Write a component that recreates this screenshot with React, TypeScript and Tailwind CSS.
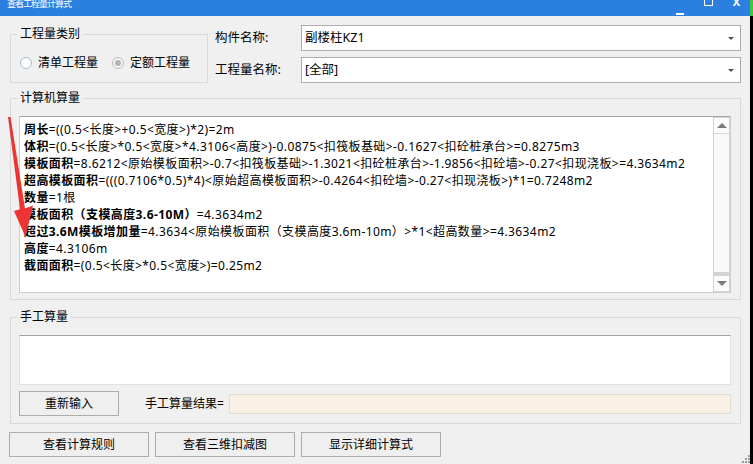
import React from "react";

const FONT = '"Noto Sans", "Noto Sans CJK SC", sans-serif';

const lines: Array<[string, string]> = [
  ["周长", "=((0.5<长度>+0.5<宽度>)*2)=2m"],
  ["体积", "=(0.5<长度>*0.5<宽度>*4.3106<高度>)-0.0875<扣筏板基础>-0.1627<扣砼桩承台>=0.8275m3"],
  ["模板面积", "=8.6212<原始模板面积>-0.7<扣筏板基础>-1.3021<扣砼桩承台>-1.9856<扣砼墙>-0.27<扣现浇板>=4.3634m2"],
  ["超高模板面积", "=(((0.7106*0.5)*4)<原始超高模板面积>-0.4264<扣砼墙>-0.27<扣现浇板>)*1=0.7248m2"],
  ["数量", "=1根"],
  ["模板面积（支模高度3.6-10M）", "=4.3634m2"],
  ["超过3.6M模板增加量", "=4.3634<原始模板面积（支模高度3.6m-10m）>*1<超高数量>=4.3634m2"],
  ["高度", "=4.3106m"],
  ["截面面积", "=(0.5<长度>*0.5<宽度>)=0.25m2"],
];

function Combo({ text }: { text: string }) {
  return (
    <div className="flex h-[26px] w-[440px] items-center border border-[#adadad] bg-white pl-[3px] pr-[6px]">
      <span className="flex-1 text-[12.5px] leading-[16px] text-black">{text}</span>
      <div className="h-0 w-0 border-x-[3px] border-t-[3px] border-x-transparent border-t-[#505050]" />
    </div>
  );
}

function Radio({ checked, label }: { checked?: boolean; label: string }) {
  return (
    <div className="flex items-center">
      {checked ? (
        <div className="flex h-[12px] w-[12px] items-center justify-center rounded-full border border-[#bcbcbc] bg-[#f4f4f4]">
          <div className="h-[6px] w-[6px] rounded-full bg-[#b4b4b4]" />
        </div>
      ) : (
        <div className="h-[12px] w-[12px] rounded-full border border-[#a9b8d6] bg-white" />
      )}
      <span className="ml-[6px] text-[12px] leading-[14px] text-black">{label}</span>
    </div>
  );
}

function Btn({ label, w }: { label: string; w: string }) {
  return (
    <div className={`flex h-[25px] ${w} items-center justify-center border border-[#adadad] bg-[#efefef] text-[12px] leading-[14px] text-black`}>
      {label}
    </div>
  );
}

export default function App() {
  return (
    <div className="relative flex h-[464px] w-[753px] overflow-hidden bg-[#f0f0f0]" style={{ fontFamily: FONT }}>
      <div className="flex w-[750px] flex-col">
        {/* title bar */}
        <div className="flex h-[16px] items-start overflow-hidden bg-[#2b7fdf] text-white">
          <span className="ml-[7px] mt-[-2px] text-[9px] leading-[11px] tracking-[-1px]">查看工程量计算式</span>
          <div className="flex-1" />
          <div className="mt-[13px] h-[2px] w-[8px] bg-white" />
          <div className="ml-[20px] mt-[-2px] h-[8px] w-[9px] border border-white border-t-2" />
          <div className="ml-[20px] mr-[10px] mt-[-4px] text-[11px] font-bold leading-[11px]">X</div>
        </div>

        {/* body */}
        <div className="flex flex-1 flex-col">
          {/* top row */}
          <div className="mt-[9px] flex h-[58px]">
            <fieldset className="ml-[10px] mt-[2px] h-[56px] w-[198px] border border-[#d9d9d9]">
              <legend className="ml-[6px] px-[3px] text-[12px] leading-[14px] text-black">工程量类别</legend>
              <div className="flex items-center gap-[14px] pl-[9px] pt-[15px]">
                <Radio label="清单工程量" />
                <Radio checked label="定额工程量" />
              </div>
            </fieldset>
            <div className="ml-[7px] flex flex-col gap-[6px]">
              <div className="flex items-center">
                <span className="w-[86px] text-[12.5px] leading-[14px] text-black">构件名称:</span>
                <Combo text="副楼柱KZ1" />
              </div>
              <div className="flex items-center">
                <span className="w-[86px] text-[12.5px] leading-[14px] text-black">工程量名称:</span>
                <Combo text="[全部]" />
              </div>
            </div>
          </div>

          {/* computer calc */}
          <fieldset className="ml-[10px] mt-[8px] w-[731px] border border-[#d9d9d9]">
            <legend className="ml-[6px] px-[3px] text-[12px] leading-[14px] text-black">计算机算量</legend>
            <div className="pb-[6px] pl-[8px] pt-[11px]">
              <div className="flex h-[177px] w-[712px] border border-[#c9ced6] border-t-[#a3a3a3] bg-white">
                <div className="flex-1 overflow-hidden pl-[4px] pt-[4px] text-[12px] leading-[17px] tracking-[0.4px] text-black">
                  {lines.map(([a, b], i) => (
                    <div key={i} className="whitespace-nowrap">
                      <span className="font-bold">{a}</span>
                      {b}
                    </div>
                  ))}
                </div>
                <div className="flex w-[17px] flex-col bg-[#f7f7f7]">
                  <div className="flex h-[17px] items-center justify-center border border-[#d4d4d4] bg-[#fbfbfb]">
                    <div className="h-0 w-0 border-x-[5px] border-b-[5px] border-x-transparent border-b-[#7a7a7a]" />
                  </div>
                  <div className="flex-1 border-x border-[#d4d4d4] bg-[#f9f9f9]" />
                  <div className="h-[3px] bg-[#d2d2d2]" />
                  <div className="flex h-[17px] items-center justify-center border border-[#d4d4d4] bg-[#fbfbfb]">
                    <div className="h-0 w-0 border-x-[5px] border-t-[5px] border-x-transparent border-t-[#7a7a7a]" />
                  </div>
                </div>
              </div>
            </div>
          </fieldset>

          {/* manual calc */}
          <fieldset className="ml-[10px] mt-[10px] w-[731px] border border-[#d9d9d9]">
            <legend className="ml-[6px] px-[3px] text-[12px] leading-[14px] text-black">手工算量</legend>
            <div className="pb-[7px] pl-[8px] pt-[11px]">
              <div className="h-[50px] w-[712px] border border-[#dfe3e8] border-t-[#a3a3a3] bg-white" />
              <div className="mt-[6px] flex w-[712px] items-center">
                <Btn label="重新输入" w="w-[100px]" />
                <span className="ml-[26px] text-[12px] leading-[14px] text-black">手工算量结果=</span>
                <div className="ml-[5px] h-[20px] flex-1 border border-[#e0dcd8] bg-[#faf0e6]" />
              </div>
            </div>
          </fieldset>

          {/* bottom buttons */}
          <div className="ml-[9px] mt-[8px] flex gap-[6px]">
            <Btn label="查看计算规则" w="w-[140px]" />
            <Btn label="查看三维扣减图" w="w-[140px]" />
            <Btn label="显示详细计算式" w="w-[140px]" />
          </div>
        </div>
      </div>
      <div className="flex w-[3px] flex-col">
        <div className="h-[16px] bg-[#3cc83c]" />
        <div className="flex-1 bg-black" />
      </div>

      {/* resize grip */}
      <svg className="pointer-events-none absolute bottom-[1px] right-[3px]" width="10" height="10" viewBox="0 0 10 10">
        {[[8, 2], [5, 5], [8, 5], [2, 8], [5, 8], [8, 8]].map(([x, y], i) => (
          <rect key={i} x={x} y={y} width="2" height="2" fill="#9a9a9a" />
        ))}
      </svg>

      {/* red annotation arrow */}
      <svg className="pointer-events-none absolute left-0 top-0" width="60" height="250" viewBox="0 0 60 250">
        <polygon points="8,117 10.5,117 25,208.5 33,205.5 25.5,237 14,211 20,209.3" fill="#ec3434" />
      </svg>
    </div>
  );
}
